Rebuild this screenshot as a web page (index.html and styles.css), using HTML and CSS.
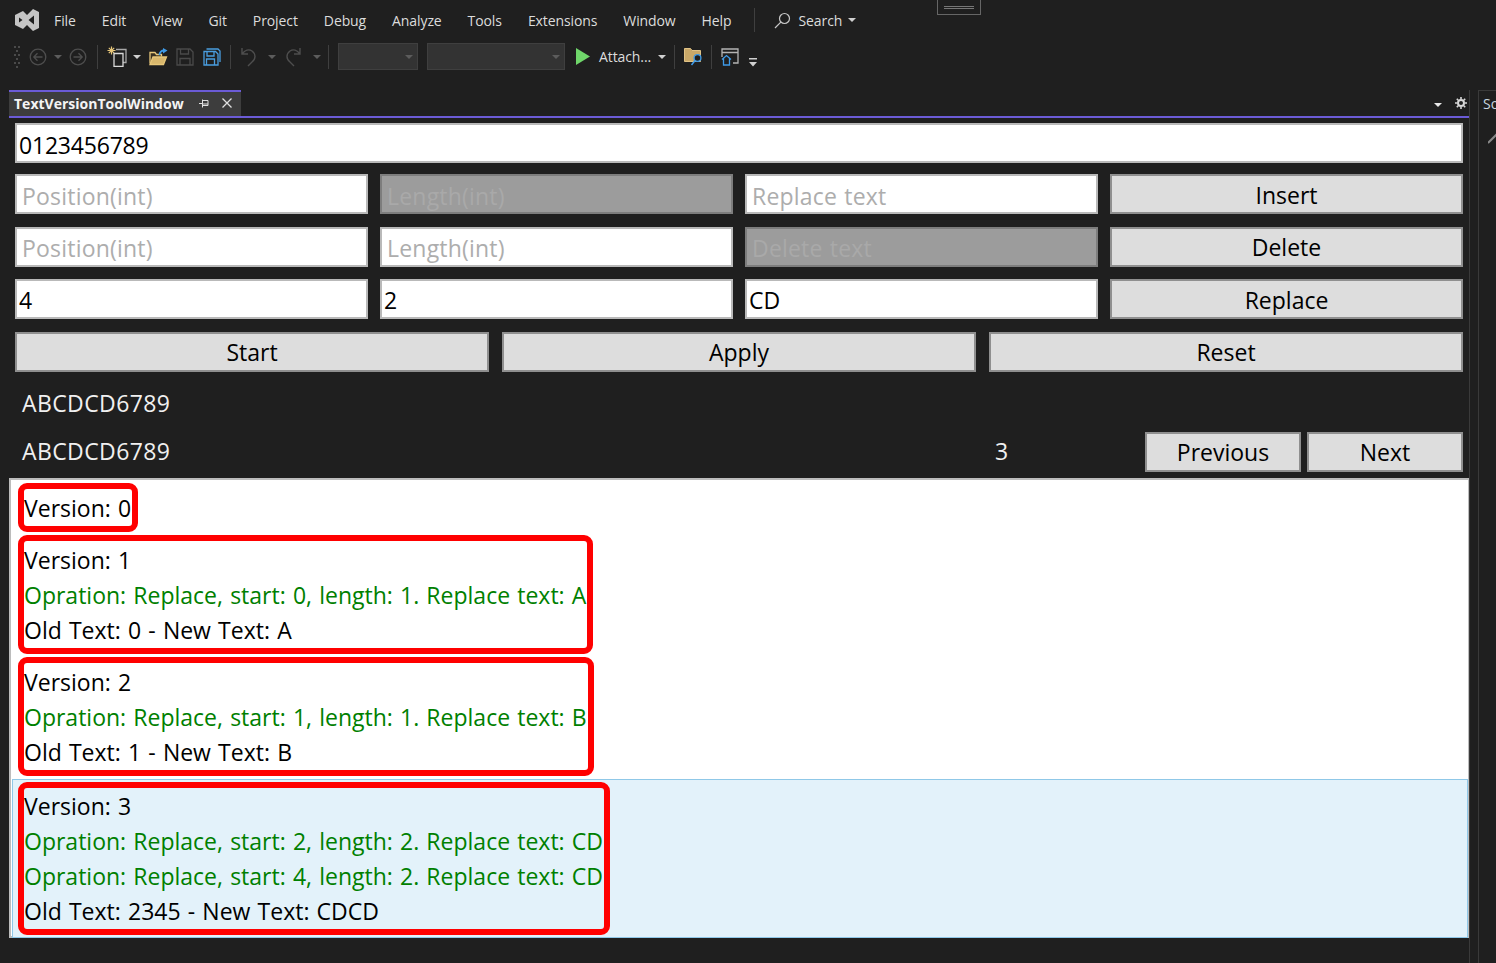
FILE: index.html
```html
<!DOCTYPE html>
<html lang="en">

<head>
  <meta charset="UTF-8">
  <title>TextVersionToolWindow</title>
  <link rel="stylesheet" href="styles.css">
</head>

<body>
  <div id="app">
    <div class="restore"><span></span></div>

    <div class="menubar">
      <svg class="logo" width="24" height="24" viewBox="0 0 24 24">
        <path fill="#c4c4c4" d="M8 3 L12 7 L18 1 L24 4 V20 L18 23 L12 17 L8 21 L0 17 V7 Z" />
        <path fill="#1f1f1f" d="M4 9.5 L7.5 12 L4 14.5 Z M19 7.5 V16.5 L13.5 12 Z" />
      </svg>
      <span>File</span>
      <span>Edit</span>
      <span>View</span>
      <span>Git</span>
      <span>Project</span>
      <span>Debug</span>
      <span>Analyze</span>
      <span>Tools</span>
      <span>Extensions</span>
      <span>Window</span>
      <span>Help</span>
      <i class="menu-sep"></i>
      <svg class="search-icon" width="17" height="17" viewBox="0 0 17 17" fill="none" stroke="#c8c8c8" stroke-width="1.2">
        <circle cx="10.5" cy="6.5" r="5" />
        <path d="M6.8 10.2 L1 16" />
      </svg>
      <span class="search-label">Search</span>
      <i class="caret light"></i>
    </div>

    <div class="toolbar">
      <svg class="grip" width="6" height="22" viewBox="0 0 6 22" fill="#4a4a4a">
        <path d="M0 0h2v2H0zM4 0h2v2H4zM2 4h2v2H2zM0 8h2v2H0zM4 8h2v2H4zM2 12h2v2H2zM0 16h2v2H0zM4 16h2v2H4zM2 20h2v2H2z" />
      </svg>
      <svg class="m9" width="18" height="18" viewBox="0 0 18 18" fill="none" stroke="#4e4e4e" stroke-width="1.3">
        <circle cx="9" cy="9" r="7.8" />
        <path d="M13.5 9H5M8.5 5.2 L4.8 9 L8.5 12.8" />
      </svg>
      <i class="caret dim m7"></i>
      <svg class="m7" width="18" height="18" viewBox="0 0 18 18" fill="none" stroke="#4e4e4e" stroke-width="1.3">
        <circle cx="9" cy="9" r="7.8" />
        <path d="M4.5 9H13M9.5 5.2 L13.2 9 L9.5 12.8" />
      </svg>
      <i class="tool-sep m10"></i>
      <svg class="m9" width="21" height="21" viewBox="0 0 21 21" fill="none">
        <path stroke="#e8c77a" stroke-width="1.2" d="M4.5 0.5v8M0.5 4.5h8M1.8 1.8l5.4 5.4M7.2 1.8l-5.4 5.4" />
        <path stroke="#a8a8a8" stroke-width="1.3" d="M9 3.5h10v13h-3" />
        <path stroke="#d8d8d8" stroke-width="1.3" d="M7 7.5h9v13H7z" />
      </svg>
      <i class="caret light m5"></i>
      <svg class="m8" width="19" height="18" viewBox="0 0 19 18" fill="none">
        <path stroke="#e8c77a" stroke-width="1.3" fill="#3a3222" d="M1 15.5V4.5h5l1.5 2h5v2" />
        <path stroke="#e8c77a" stroke-width="1.3" fill="#d9b76c" d="M1 16.5 L4 9h13.5l-3 7.5z" />
        <path stroke="#3f9be8" stroke-width="1.8" d="M10.5 7c0-3 2-4.5 4.5-4.5" />
        <path fill="#3f9be8" d="M14 0 L18.5 2.5 L14 5.5z" />
      </svg>
      <svg class="m8" width="18" height="18" viewBox="0 0 18 18" fill="none" stroke="#4a4a4a" stroke-width="1.3">
        <path d="M1 1h13l3 3v13H1zM4.5 1v5h8V1M4 17v-6.5h10V17" />
      </svg>
      <svg class="m9" width="18" height="18" viewBox="0 0 18 18" fill="none" stroke="#4a9ee0" stroke-width="1.3">
        <path d="M3.5 1H15l2 2v11" />
        <path d="M1 3.5h11.5l2.5 2.5v11H1zM4 3.5v4.5h7V3.5M3.5 17v-6h8v6" />
      </svg>
      <i class="tool-sep m9"></i>
      <svg class="m10" width="16" height="20" viewBox="0 0 16 20" fill="none" stroke="#4e4e4e" stroke-width="1.4">
        <path d="M1 1v6h6M1 7c3-4 7-5 10-3 4 3 4 8 0 11l-4 4" />
      </svg>
      <i class="caret dim m11"></i>
      <svg class="m9" width="16" height="20" viewBox="0 0 16 20" fill="none" stroke="#4e4e4e" stroke-width="1.4">
        <path d="M15 1v6H9M15 7c-3-4-7-5-10-3-4 3-4 8 0 11l4 4" />
      </svg>
      <i class="caret dim m12"></i>
      <i class="tool-sep m7"></i>
      <div class="combo combo-small m9"><i class="caret dim"></i></div>
      <div class="combo combo-wide m9"><i class="caret dim"></i></div>
      <svg class="m11" width="14" height="17" viewBox="0 0 14 17">
        <path fill="#6fd66a" d="M0 0 L14 8.5 L0 17 Z" />
      </svg>
      <span class="attach m9">Attach...</span>
      <i class="caret light m5"></i>
      <i class="tool-sep m8"></i>
      <svg class="m9" width="19" height="19" viewBox="0 0 19 19" fill="none">
        <path fill="#c9a868" stroke="#e0c285" d="M0.5 14.5V1.5h6l1.5 2h8.5v11z" />
        <circle cx="13.5" cy="11" r="3.4" fill="#1f1f1f" stroke="#3f9be8" stroke-width="1.3" />
        <path stroke="#3f9be8" stroke-width="1.5" d="M11 13.5 L7.5 18" />
      </svg>
      <i class="tool-sep m8"></i>
      <svg class="m9" width="18" height="18" viewBox="0 0 18 18" fill="none">
        <path stroke="#b4b4b4" stroke-width="1.3" d="M1 9V1h16v14h-5M1 4.5h16" />
        <path stroke="#3f9be8" stroke-width="1.3" d="M1 11.5 L5.5 7.5 L10 11.5M2.5 10.5V17h6v-6.5" />
      </svg>
      <svg class="overflow m10" width="8" height="9" viewBox="0 0 8 9" fill="#d0d0d0">
        <path d="M0 0h8v1.4H0zM0 4h8L4 8.5z" />
      </svg>
    </div>

    <div class="workspace">
      <div class="toolwindow">
        <div class="tabstrip">
          <div class="tab">
            <span class="tab-title">TextVersionToolWindow</span>
            <svg class="pin" width="10" height="9" viewBox="0 0 10 9" fill="none" stroke="#e0e0e0">
              <path d="M0 4.5h3.5M3.5 0.5v8M3.5 1.5h5.5v5H3.5M3.5 5h5.5" />
            </svg>
            <svg class="close" width="10" height="10" viewBox="0 0 10 10" stroke="#e0e0e0" stroke-width="1.3">
              <path d="M0.5 0.5 L9.5 9.5M9.5 0.5 L0.5 9.5" />
            </svg>
          </div>
          <i class="caret white tab-caret"></i>
          <svg class="gear" width="12" height="12" viewBox="0 0 12 12" fill="none" stroke="#d8d8d8">
            <circle cx="6" cy="6" r="3" stroke-width="2" />
            <path stroke-width="1.6" d="M6 0v2M6 10v2M0 6h2M10 6h2M1.8 1.8l1.4 1.4M8.8 8.8l1.4 1.4M10.2 1.8L8.8 3.2M3.2 8.8l-1.4 1.4" />
          </svg>
        </div>

        <div class="form">
          <input class="field top-field" value="0123456789">
          <div class="stack">
            <div class="row four">
              <input class="field" placeholder="Position(int)">
              <input class="field" placeholder="Length(int)" disabled>
              <input class="field" placeholder="Replace text">
              <button class="btn">Insert</button>
            </div>
            <div class="row four">
              <input class="field" placeholder="Position(int)">
              <input class="field" placeholder="Length(int)">
              <input class="field" placeholder="Delete text" disabled>
              <button class="btn">Delete</button>
            </div>
            <div class="row four">
              <input class="field" value="4">
              <input class="field" value="2">
              <input class="field" value="CD">
              <button class="btn">Replace</button>
            </div>
            <div class="row three">
              <button class="btn">Start</button>
              <button class="btn">Apply</button>
              <button class="btn">Reset</button>
            </div>
          </div>
          <div class="info-line">ABCDCD6789</div>
          <div class="row three pager">
            <div class="pager-text">ABCDCD6789</div>
            <div></div>
            <div class="pager-controls">
              <span class="pager-count">3</span>
              <button class="btn pager-btn">Previous</button>
              <button class="btn pager-btn">Next</button>
            </div>
          </div>
        </div>

        <div class="versions">
          <div class="version">
            <div class="version-box">
              <div>Version: 0</div>
            </div>
          </div>
          <div class="version">
            <div class="version-box">
              <div>Version: 1</div>
              <div class="op">Opration: Replace, start: 0, length: 1. Replace text: A</div>
              <div>Old Text: 0 - New Text: A</div>
            </div>
          </div>
          <div class="version">
            <div class="version-box">
              <div>Version: 2</div>
              <div class="op">Opration: Replace, start: 1, length: 1. Replace text: B</div>
              <div>Old Text: 1 - New Text: B</div>
            </div>
          </div>
          <div class="version selected">
            <div class="version-box">
              <div>Version: 3</div>
              <div class="op">Opration: Replace, start: 2, length: 2. Replace text: CD</div>
              <div class="op">Opration: Replace, start: 4, length: 2. Replace text: CD</div>
              <div>Old Text: 2345 - New Text: CDCD</div>
            </div>
          </div>
        </div>
      </div>

      <div class="sidepanel">
        <span>So</span>
        <svg width="10" height="14" viewBox="0 0 10 14" stroke="#8a8a8a" stroke-width="2">
          <path d="M0 13 L10 3" />
        </svg>
      </div>
    </div>
  </div>
</body>

</html>
```

FILE: styles.css
```css
* {
  box-sizing: border-box;
}

html,
body {
  margin: 0;
  padding: 0;
  height: 100%;
  overflow: hidden;
  background: #1f1f1f;
}

#app {
  position: relative;
  height: 963px;
  display: flex;
  flex-direction: column;
  color: #000;
  font-family: "Open Sans", "Noto Sans", sans-serif;
}

i {
  display: block;
  flex: none;
}

svg {
  display: block;
  flex: none;
}

.restore {
  position: absolute;
  top: 0;
  left: 937px;
  width: 44px;
  height: 15px;
  padding-top: 6px;
  border: 1px solid #666;
  border-top: 0;
}

.restore span {
  display: block;
  width: 30px;
  height: 3px;
  margin: 0 auto;
  border-top: 1px solid #777;
  border-bottom: 1px solid #777;
}

/* menu */
.menubar {
  height: 40px;
  flex: none;
  display: flex;
  align-items: center;
  gap: 26px;
  padding-left: 15px;
  color: #dcdcdc;
  font-size: 14px;
  letter-spacing: -0.1px;
}

.logo {
  margin-right: -11px;
}

.menu-sep {
  width: 1px;
  height: 24px;
  margin-left: -4px;
  background: #3f3f3f;
}

.search-icon {
  margin-left: -7px;
}

.search-label {
  margin-left: -18px;
}

.caret {
  width: 0;
  height: 0;
  border-left: 4px solid transparent;
  border-right: 4px solid transparent;
  border-top: 4px solid #8a8a8a;
}

.caret.dim {
  border-top-color: #5c5c5c;
}

.caret.light {
  border-top-color: #d0d0d0;
}

.caret.white {
  border-top-color: #e8e8e8;
}

.menubar .caret {
  margin-left: -20px;
}

/* toolbar */
.toolbar {
  height: 33px;
  flex: none;
  display: flex;
  align-items: center;
  padding-left: 14px;
  color: #dcdcdc;
  font-size: 14px;
  letter-spacing: -0.1px;
}

.m5 { margin-left: 5px; }
.m7 { margin-left: 7px; }
.m8 { margin-left: 8px; }
.m9 { margin-left: 9px; }
.m10 { margin-left: 10px; }
.m11 { margin-left: 11px; }
.m12 { margin-left: 12px; }

.tool-sep {
  width: 1px;
  height: 24px;
  background: #3f3f3f;
}

.combo {
  height: 27px;
  display: flex;
  align-items: center;
  justify-content: flex-end;
  padding-right: 4px;
  background: #333;
  border: 1px solid #3f3f3f;
}

.combo-small {
  width: 80px;
}

.combo-wide {
  width: 138px;
}

.attach {
  width: 54px;
  white-space: nowrap;
}

.overflow {
  margin-top: 12px;
}

/* tool window */
.workspace {
  flex: 1;
  min-height: 0;
  display: flex;
  margin-top: 17px;
}

.toolwindow {
  width: 1460px;
  margin-left: 9px;
  display: flex;
  flex-direction: column;
  box-shadow: 1px 0 0 #3a3a3a;
}

.tabstrip {
  height: 28px;
  flex: none;
  display: flex;
  align-items: center;
  border-bottom: 2px solid #6b5bd6;
}

.tab {
  width: 232px;
  height: 26px;
  display: flex;
  align-items: center;
  padding: 0 0 2px 5px;
  background: #3d3d3d;
  border-top: 2px solid #6b5bd6;
}

.tab-title {
  width: 181px;
  color: #f4f4f4;
  font-size: 14px;
  font-weight: 700;
  letter-spacing: 0;
  white-space: nowrap;
}

.pin {
  margin-left: 4px;
}

.close {
  margin-left: 13px;
}

.tab-caret {
  margin: 4px 0 0 auto;
}

.gear {
  margin-left: 13px;
  margin-right: 2px;
}

.form {
  flex: none;
  padding: 5px 6px 6px;
}

.field,
.btn {
  width: 100%;
  height: 40px;
  margin: 0;
  font-family: "Open Sans", "Noto Sans", sans-serif;
  font-size: 23px;
  color: #000;
  border-radius: 0;
  outline: 0;
}

.field {
  padding: 2px 2px 0;
  background: #fff;
  border: 2px solid #b9b9b9;
  word-spacing: 1px;
}

.field:placeholder-shown {
  padding: 3px 5px 0;
  letter-spacing: 0.2px;
}

.top-field {
  padding-top: 4px;
  letter-spacing: -0.2px;
}

.field::placeholder {
  color: #adadad;
  opacity: 1;
}

.field:disabled {
  background: #9c9c9c;
  border-color: #7d7d7d;
}

.field:disabled::placeholder {
  color: #a9a9a9;
}

.btn {
  padding: 1px 0 0;
  background: #dddddd;
  border: 2px solid #8f8f8f;
}

.stack {
  display: flex;
  flex-direction: column;
  gap: 12.67px;
  margin-top: 11px;
}

.row {
  display: grid;
}

.four {
  grid-template-columns: repeat(4, 1fr);
  column-gap: 12px;
}

.three {
  grid-template-columns: repeat(3, 474px);
  column-gap: 13px;
}

.info-line,
.pager-text {
  height: 40px;
  padding-left: 7px;
  color: #f0f0f0;
  font-size: 23px;
  line-height: 40px;
  letter-spacing: 0.4px;
}

.info-line {
  margin-top: 11px;
}

.pager {
  margin-top: 9px;
}

.pager-text {
  line-height: 38px;
  white-space: nowrap;
}

.pager-controls {
  display: flex;
  align-items: center;
  gap: 6px;
}

.pager-count {
  flex: 1;
  padding: 0 0 2px 6px;
  color: #f0f0f0;
  font-size: 23px;
}

.pager-btn {
  width: 156px;
}

/* version list */
.versions {
  height: 460px;
  flex: none;
  padding-top: 3px;
  background: #fff;
  border: 2px solid #bcbcbc;
  border-right-width: 1px;
  font-size: 23px;
  line-height: 35px;
  word-spacing: 1.2px;
}

.version {
  padding: 0 0 3px 7px;
}

.version-box {
  width: fit-content;
  padding: 2px 1px 0 0;
  border: 6px solid #ff0000;
  border-radius: 9px;
  white-space: nowrap;
}

.op {
  color: #008000;
}

.version.selected {
  margin: 0 0 0 1px;
  padding: 2px 0 2px 5px;
  background: #e3f2fa;
  border: 1px solid #8fc8e8;
}

.selected .version-box {
  padding-top: 1px;
}

/* side panel */
.sidepanel {
  flex: 1;
  margin-left: 9px;
  padding: 3px 0 0 4px;
  overflow: hidden;
  color: #c9d6e0;
  font-size: 14px;
  border-left: 1px solid #3a3a3a;
  border-top: 1px solid #3a3a3a;
}

.sidepanel svg {
  margin: 17px 0 0 5px;
}
```
